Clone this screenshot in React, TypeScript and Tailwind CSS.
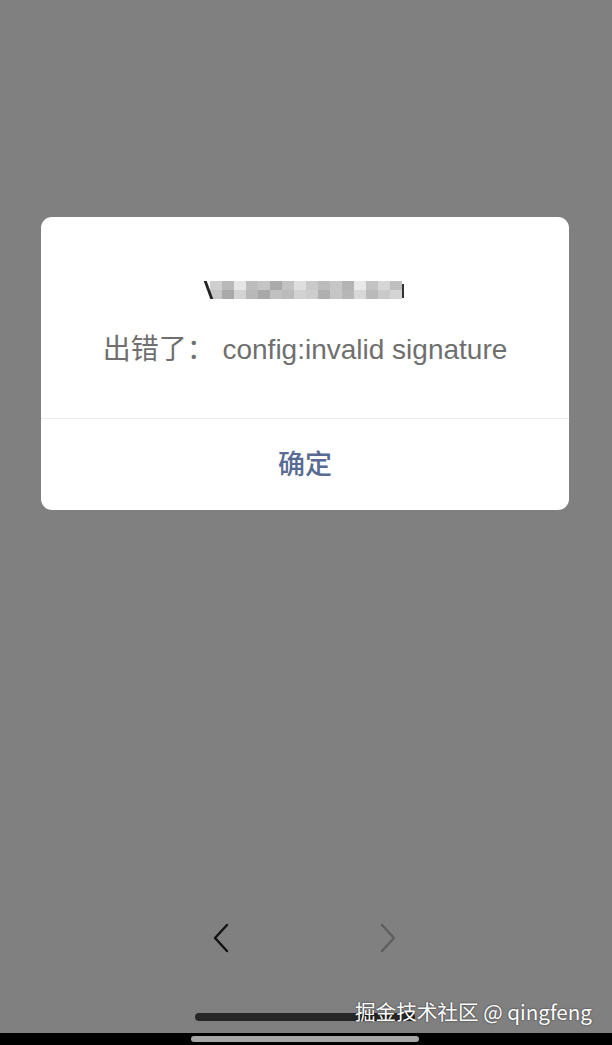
import React from 'react';

const blurRows: string[][] = [
  ['#cfcfcf', '#b9b9b9', '#e6e6e6', '#bdbdbd', '#c4c4c4', '#aaaaaa', '#c2c2c2', '#dedede', '#c9c9c9', '#bcbcbc', '#c6c6c6', '#b4b4b4', '#e9e9e9', '#c3c3c3', '#d6d6d6', '#bfbfbf'],
  ['#c7c7c7', '#a9a9a9', '#d3d3d3', '#b8b8b8', '#a8a8a8', '#c1c1c1', '#bbbbbb', '#d2d2d2', '#cdcdcd', '#b0b0b0', '#c5c5c5', '#b7b7b7', '#d8d8d8', '#bababa', '#cacaca', '#d4d4d4'],
];

const Chevron: React.FC<{ dir: 'left' | 'right'; color: string }> = ({ dir, color }) => (
  <svg width="18" height="30" viewBox="0 0 18 30" fill="none">
    <polyline
      points={dir === 'left' ? '15,2 3,15 15,28' : '3,2 15,15 3,28'}
      stroke={color}
      strokeWidth="2.4"
      strokeLinecap="round"
      strokeLinejoin="round"
    />
  </svg>
);

const App: React.FC = () => {
  return (
    <div
      className="relative w-[612px] h-[1045px] bg-[#808080] flex flex-col overflow-hidden"
      style={{ fontFamily: '"Liberation Sans", "Noto Sans CJK SC", sans-serif' }}
    >
      {/* alert dialog */}
      <div className="mt-[217px] ml-[41px] w-[528px] h-[293px] bg-white rounded-[11px] flex flex-col">
        <div className="h-[201px] flex flex-col items-center">
          <div className="mt-[64px] flex items-stretch">
            <div className="w-[3px] h-[18px] bg-[#222] skew-x-[20deg]" />
            <div className="flex flex-col">
              {blurRows.map((row, i) => (
                <div key={i} className="flex">
                  {row.map((c, j) => (
                    <div key={j} className="w-[12px] h-[9px]" style={{ backgroundColor: c }} />
                  ))}
                </div>
              ))}
            </div>
            <div className="w-[2px] h-[14px] mt-[3px] bg-[#333]" />
          </div>
          <p className="mt-[34px] text-[28px] leading-[34px] text-[#6f6f6f]">
            出错了： config:invalid signature
          </p>
        </div>
        <div className="h-px bg-[#ececec]" />
        <div className="flex-1 flex items-center justify-center">
          <span className="text-[27px] leading-[34px] font-medium text-[#576b95]">确定</span>
        </div>
      </div>

      {/* page navigation */}
      <div className="mt-[413px] flex h-[30px]">
        <div className="ml-[212px]">
          <Chevron dir="left" color="#111" />
        </div>
        <div className="ml-[149px]">
          <Chevron dir="right" color="#5e5e5e" />
        </div>
      </div>

      <div className="mt-[60px] ml-[195px] w-[220px] h-[8px] rounded-full bg-[#262626]" />

      <div className="mt-auto h-[12px] bg-black pt-[3px]">
        <div className="ml-[191px] w-[228px] h-[6px] rounded-full bg-[#a6a6a6]" />
      </div>

      {/* watermark */}
      <div
        className="absolute left-[355px] top-[997px] text-[20.6px] leading-[28px] text-white"
        style={{ textShadow: '0 0 2px rgba(0,0,0,0.7)', fontFamily: '"Noto Sans CJK SC", sans-serif' }}
      >
        掘金技术社区 @ qingfeng
      </div>
    </div>
  );
};

export default App;
